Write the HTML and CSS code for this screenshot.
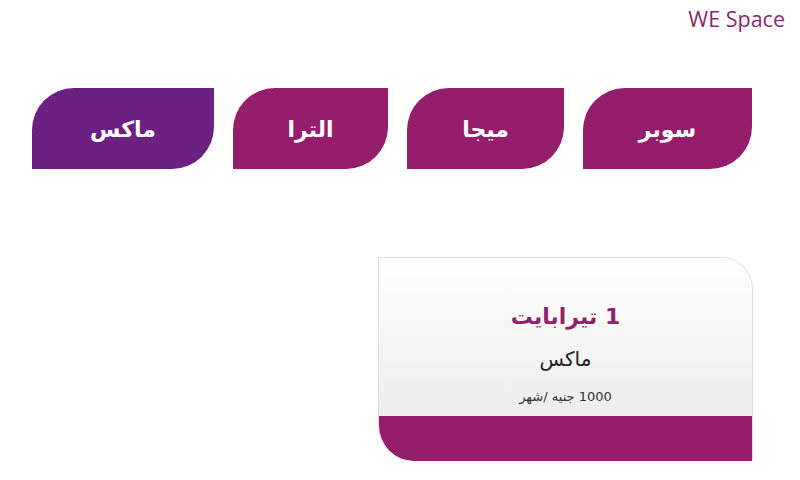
FILE: index.html
```html
<!DOCTYPE html>
<html lang="ar">
<head>
<meta charset="utf-8">
<link rel="stylesheet" href="styles.css">
</head>
<body>
<div class="page">
  <header class="top">
    <span class="brand">WE Space</span>
  </header>
  <nav class="tabs" dir="rtl">
    <a class="tab tab-super">سوبر</a>
    <a class="tab tab-mega">ميجا</a>
    <a class="tab tab-ultra">الترا</a>
    <a class="tab tab-max active">ماكس</a>
  </nav>
  <section class="plans" dir="rtl">
    <div class="card">
      <div class="card-body">
        <div class="size">1 تيرابايت</div>
        <div class="name">ماكس</div>
        <div class="price">1000 جنيه /شهر</div>
      </div>
      <div class="card-band"></div>
    </div>
  </section>
</div>
</body>
</html>
```
FILE: styles.css
```css
* { box-sizing: border-box; }
html, body { margin: 0; padding: 0; background: #fff; }
body { font-family: "DejaVu Sans", "Open Sans", sans-serif; }
.page { width: 800px; height: 480px; display: flex; flex-direction: column; }
.top { display: flex; justify-content: flex-end; padding: 5px 15px 0 0; height: 88px; }
.brand { font-family: "Open Sans", "DejaVu Sans", sans-serif; font-size: 21.5px; color: #8b2a6e; line-height: 28px; }
.tabs { display: flex; gap: 19px; padding: 0 48px 0 0; height: 81px; }
.tab { display: flex; align-items: center; justify-content: center; height: 81px; background: #951d6c; color: #fff; font-weight: bold; font-size: 22px; border-radius: 42px 0 42px 0; text-decoration: none; padding-top: 2px; }
.tab-super { width: 169px; }
.tab-mega { width: 157px; }
.tab-ultra { width: 155px; }
.tab-max { width: 182px; }
.tab.active { background: #6c2182; }
.plans { display: flex; padding: 88px 47px 0 0; }
.card { width: 375px; height: 204px; display: flex; flex-direction: column; border-radius: 0 32px 0 36px; overflow: hidden; border: 1px solid #dddddd; border-bottom: none; }
.card-body { flex: 1; display: flex; flex-direction: column; align-items: center; background: linear-gradient(#ffffff, #ededed); padding-top: 41px; }
.size { font-size: 22px; font-weight: bold; color: #951d6c; line-height: 36px; }
.name { font-size: 20px; color: #222; line-height: 28px; margin-top: 10px; }
.price { font-size: 13px; color: #333; line-height: 20px; margin-top: 14px; }
.card-band { height: 45px; background: #951d6c; margin: 0 -1px; }
```
